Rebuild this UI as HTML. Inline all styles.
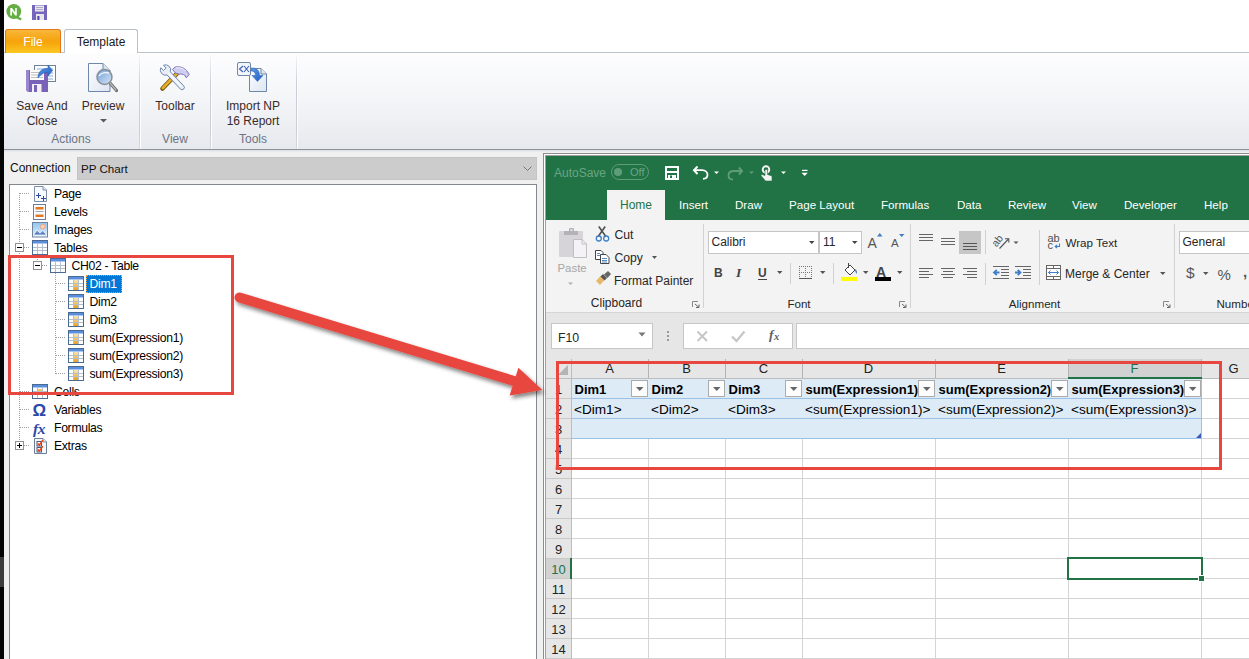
<!DOCTYPE html>
<html><head><meta charset="utf-8">
<style>
*{margin:0;padding:0;box-sizing:border-box}
html,body{width:1249px;height:659px;overflow:hidden;background:#f0f0f0;font-family:"Liberation Sans",sans-serif;position:relative}
.a{position:absolute}
.t{position:absolute;white-space:nowrap;line-height:1}
svg{position:absolute;overflow:visible}
</style></head><body>
<div class="a" style="left:0px;top:0px;width:4px;height:659px;background:#050505"></div>
<div class="a" style="left:0px;top:557px;width:4px;height:30px;background:#3c3c3c"></div>
<div class="a" style="left:4px;top:0px;width:1245px;height:52px;background:#fff"></div>
<div class="a" style="left:4px;top:52px;width:1245px;height:97px;background:linear-gradient(#fdfdfe,#f6f7f9 40%,#e6e9ee);"></div>
<div class="a" style="left:4px;top:52px;width:1245px;height:1px;background:#bcc3cc"></div>
<div class="a" style="left:4px;top:149px;width:1245px;height:1px;background:#8d939b"></div>
<div class="a" style="left:4px;top:150px;width:1245px;height:2px;background:linear-gradient(#d9dce1,#eeeff0)"></div>
<div class="a" style="left:139px;top:55px;width:1px;height:94px;background:linear-gradient(#f4f5f7,#c9ced6 30%,#c9ced6 80%,#d5d9df)"></div>
<div class="a" style="left:140px;top:55px;width:1px;height:94px;background:#fdfdfd"></div>
<div class="a" style="left:210px;top:55px;width:1px;height:94px;background:linear-gradient(#f4f5f7,#c9ced6 30%,#c9ced6 80%,#d5d9df)"></div>
<div class="a" style="left:211px;top:55px;width:1px;height:94px;background:#fdfdfd"></div>
<div class="a" style="left:296px;top:55px;width:1px;height:94px;background:linear-gradient(#f4f5f7,#c9ced6 30%,#c9ced6 80%,#d5d9df)"></div>
<div class="a" style="left:297px;top:55px;width:1px;height:94px;background:#fdfdfd"></div>
<div class="a" style="left:5px;top:29px;width:56px;height:24px;border:1px solid #e2781a;border-bottom:none;border-radius:3px 3px 0 0;background:linear-gradient(#f9b73b,#f6a30f 45%,#f7a90c 60%,#fbc824)"></div>
<div class="t" style="left:-67px;width:200px;text-align:center;top:35.84px;font-size:12px;color:#fff;font-weight:400;">File</div>
<div class="a" style="left:64px;top:29px;width:74px;height:24px;border:1px solid #b9c0c9;border-bottom:none;border-radius:3px 3px 0 0;background:#fff"></div>
<div class="t" style="left:1px;width:200px;text-align:center;top:35.84px;font-size:12px;color:#1a1a1a;font-weight:400;">Template</div>
<svg style="left:0;top:0" width="60" height="28" viewBox="0 0 60 28">
<circle cx="13.8" cy="11.5" r="7.4" fill="#64ae42"/>
<path d="M16 15.5 L21.8 18.5 L20.5 20.5 L15 17.5Z" fill="#64ae42"/>
<path d="M10.3 15.5 V8 H12 L15.2 12.6 V8 H16.8 V15.5 H15.2 L12 10.9 V15.5Z" fill="#fff"/>
<rect x="32" y="5" width="15" height="15" fill="#7565bd"/>
<rect x="35" y="5.5" width="9" height="6" fill="#e8e8f0"/>
<rect x="36" y="7" width="7" height="0.8" fill="#9a9ab0"/><rect x="36" y="9" width="7" height="0.8" fill="#9a9ab0"/>
<rect x="36" y="14" width="8" height="6" fill="#e6e6ea"/>
<rect x="37.3" y="16" width="2.2" height="4" fill="#5a4aa8"/>
</svg>
<svg style="left:0;top:55" width="300" height="45" viewBox="0 55 300 45">
<defs>
<linearGradient id="pg" x1="0" y1="0" x2="1" y2="1"><stop offset="0" stop-color="#fdfdff"/><stop offset="1" stop-color="#dde5f2"/></linearGradient>
<linearGradient id="lens" x1="0" y1="0" x2="1" y2="1"><stop offset="0" stop-color="#6e9fd8"/><stop offset="1" stop-color="#d8e6f6"/></linearGradient>
<linearGradient id="arr" x1="0" y1="0" x2="1" y2="1"><stop offset="0" stop-color="#5b9ae8"/><stop offset="1" stop-color="#1e5fc0"/></linearGradient>
</defs>
<!-- save and close -->
<rect x="34.5" y="65.5" width="21" height="16" fill="#fafcff" stroke="#6f8297"/>
<path d="M37 69h16M42 73h11M42 76h11M42 79h11" stroke="#8fa8d8" stroke-width="1"/>
<path d="M26 70 H48 V92 H28 L26 90Z" fill="#7a62b8"/>
<path d="M26 70 H29 V92 H28 L26 90Z" fill="#9b86d0"/>
<rect x="30" y="70" width="14" height="10" fill="#fbfbfb"/>
<path d="M31 72.5h12M31 75h12M31 77.5h12" stroke="#b8b8b8" stroke-width="0.9"/>
<rect x="32" y="84" width="9.5" height="8" fill="#f1f1f1"/>
<rect x="34" y="85" width="3" height="7" fill="#7a62b8"/>
<path d="M38 78 C38 71 43 68 48 68.5 V65 L52.5 70.5 L48 76 V72.5 C44 72 41 74 38 78Z" fill="url(#arr)" stroke="#2a5cb0" stroke-width="0.6"/>
<!-- preview -->
<path d="M88.5 63.5 H103 L110 70.5 V91.5 H88.5Z" fill="url(#pg)" stroke="#6f87a8"/>
<path d="M103 63.5 V70.5 H110" fill="#d8e4f4" stroke="#6f87a8"/>
<line x1="110" y1="83" x2="116.5" y2="90.5" stroke="#6a6a6a" stroke-width="3.2" stroke-linecap="round"/>
<line x1="110" y1="83" x2="116" y2="90" stroke="#bdbdbd" stroke-width="1.2" stroke-linecap="round"/>
<circle cx="104.5" cy="77" r="7.5" fill="url(#lens)" stroke="#8a8f96" stroke-width="1.5"/>
<path d="M99 76 C101 73 105 72 109 73" stroke="#f2f6fc" stroke-width="1.3" fill="none"/>
<!-- toolbar -->
<line x1="162.5" y1="88.5" x2="177.5" y2="73" stroke="#7a5a18" stroke-width="4.6" stroke-linecap="round"/>
<line x1="162.8" y1="88" x2="177.5" y2="73" stroke="#e6ad2a" stroke-width="2.6" stroke-linecap="round"/>
<path d="M172.5 69.5 L174.5 67.3 C178 66 183 67 186.5 70.5 L189.3 74.3 L186.3 77.8 L184.8 75.3 C183 74 181 73.8 179 74.2 L175.5 73 Z" fill="#cfcdee" stroke="#6e66b8" stroke-width="0.9"/>
<path d="M176 68 C179 67.3 183 68 185.5 71" stroke="#f4f4fc" stroke-width="1" fill="none"/>
<g transform="translate(165.5,70) rotate(46.5)">
<path d="M4.66 -2.3 L24 -2.3 A2.3 2.3 0 0 1 24 2.3 L4.66 2.3 A5.2 5.2 0 0 1 -4.88 1.8 L-1 1.8 L-1 -1.8 L-4.88 -1.8 A5.2 5.2 0 0 1 4.66 -2.3 Z" fill="#e8eef8" stroke="#6e83a8" stroke-width="0.9"/>
<path d="M4 0 H23" stroke="#fafcff" stroke-width="1.2"/>
</g>
<!-- import np -->
<path d="M249.5 68.5 H261 L266.5 74 V91.5 H249.5Z" fill="url(#pg)" stroke="#6f87a8"/>
<path d="M261 68.5 V74 H266.5" fill="#e0e8f4" stroke="#6f87a8"/>
<rect x="237.5" y="62.5" width="13" height="13" rx="1.5" fill="#f2f5fa" stroke="#6f87a8"/>
<path d="M243 66 L239.5 69 L243 72" stroke="#3a5fb5" stroke-width="1.1" fill="none"/>
<path d="M244 66 L249 72 M249 66 L244 72" stroke="#3a5fb5" stroke-width="1.1"/>
<path d="M251 68 C256 67.5 259.5 70 259.5 75.5 H263 L257.5 81.5 L252 75.5 H255.5 C255.5 72.5 254 71 251 71 Z" fill="url(#arr)" stroke="#2a5cb0" stroke-width="0.5"/>
</svg>
<div class="t" style="left:-58px;width:200px;text-align:center;top:99.84px;font-size:12px;color:#3a2a2a;font-weight:400;">Save And</div>
<div class="t" style="left:-58px;width:200px;text-align:center;top:114.84px;font-size:12px;color:#3a2a2a;font-weight:400;">Close</div>
<div class="t" style="left:3px;width:200px;text-align:center;top:99.84px;font-size:12px;color:#3a2a2a;font-weight:400;">Preview</div>
<svg style="left:100px;top:119px" width="7" height="4"><path d="M0 0H7L3.5 3.5Z" fill="#5a5a5a"/></svg>
<div class="t" style="left:75px;width:200px;text-align:center;top:99.84px;font-size:12px;color:#3a2a2a;font-weight:400;">Toolbar</div>
<div class="t" style="left:153px;width:200px;text-align:center;top:99.84px;font-size:12px;color:#3a2a2a;font-weight:400;">Import NP</div>
<div class="t" style="left:153px;width:200px;text-align:center;top:114.84px;font-size:12px;color:#3a2a2a;font-weight:400;">16 Report</div>
<div class="t" style="left:-29px;width:200px;text-align:center;top:132.84px;font-size:12px;color:#6c7482;font-weight:400;">Actions</div>
<div class="t" style="left:75px;width:200px;text-align:center;top:132.84px;font-size:12px;color:#6c7482;font-weight:400;">View</div>
<div class="t" style="left:153px;width:200px;text-align:center;top:132.84px;font-size:12px;color:#6c7482;font-weight:400;">Tools</div>
<div class="t" style="left:10px;top:161.84px;font-size:12px;color:#111;font-weight:400;">Connection</div>
<div class="a" style="left:77px;top:157px;width:460px;height:23px;background:#cccccc;border:1px solid #c4c4c4"></div>
<div class="t" style="left:81px;top:163.18px;font-size:11.6px;color:#111;font-weight:400;">PP Chart</div>
<svg style="left:523px;top:166px" width="10" height="6"><path d="M0.5 0.5 L4.5 4.5 L8.5 0.5" stroke="#7a7a7a" fill="none" stroke-width="1"/></svg>
<div class="a" style="left:9px;top:184px;width:528px;height:475px;background:#fff;border:1px solid #828790;border-bottom:none"></div>
<div class="a" style="left:19px;top:193px;width:1px;height:253px;background:repeating-linear-gradient(#a0a0a0 0 1px,transparent 1px 2px)"></div>
<div class="a" style="left:20px;top:193px;width:10px;height:1px;background:repeating-linear-gradient(90deg,#a0a0a0 0 1px,transparent 1px 2px)"></div>
<div class="a" style="left:20px;top:211px;width:10px;height:1px;background:repeating-linear-gradient(90deg,#a0a0a0 0 1px,transparent 1px 2px)"></div>
<div class="a" style="left:20px;top:229px;width:10px;height:1px;background:repeating-linear-gradient(90deg,#a0a0a0 0 1px,transparent 1px 2px)"></div>
<div class="a" style="left:20px;top:247px;width:10px;height:1px;background:repeating-linear-gradient(90deg,#a0a0a0 0 1px,transparent 1px 2px)"></div>
<div class="a" style="left:20px;top:391px;width:10px;height:1px;background:repeating-linear-gradient(90deg,#a0a0a0 0 1px,transparent 1px 2px)"></div>
<div class="a" style="left:20px;top:409px;width:10px;height:1px;background:repeating-linear-gradient(90deg,#a0a0a0 0 1px,transparent 1px 2px)"></div>
<div class="a" style="left:20px;top:427px;width:10px;height:1px;background:repeating-linear-gradient(90deg,#a0a0a0 0 1px,transparent 1px 2px)"></div>
<div class="a" style="left:20px;top:445px;width:10px;height:1px;background:repeating-linear-gradient(90deg,#a0a0a0 0 1px,transparent 1px 2px)"></div>
<div class="a" style="left:37px;top:247px;width:1px;height:19px;background:repeating-linear-gradient(#a0a0a0 0 1px,transparent 1px 2px)"></div>
<div class="a" style="left:38px;top:265px;width:10px;height:1px;background:repeating-linear-gradient(90deg,#a0a0a0 0 1px,transparent 1px 2px)"></div>
<div class="a" style="left:55px;top:265px;width:1px;height:109px;background:repeating-linear-gradient(#a0a0a0 0 1px,transparent 1px 2px)"></div>
<div class="a" style="left:56px;top:283px;width:10px;height:1px;background:repeating-linear-gradient(90deg,#a0a0a0 0 1px,transparent 1px 2px)"></div>
<div class="a" style="left:56px;top:301px;width:10px;height:1px;background:repeating-linear-gradient(90deg,#a0a0a0 0 1px,transparent 1px 2px)"></div>
<div class="a" style="left:56px;top:319px;width:10px;height:1px;background:repeating-linear-gradient(90deg,#a0a0a0 0 1px,transparent 1px 2px)"></div>
<div class="a" style="left:56px;top:337px;width:10px;height:1px;background:repeating-linear-gradient(90deg,#a0a0a0 0 1px,transparent 1px 2px)"></div>
<div class="a" style="left:56px;top:355px;width:10px;height:1px;background:repeating-linear-gradient(90deg,#a0a0a0 0 1px,transparent 1px 2px)"></div>
<div class="a" style="left:56px;top:373px;width:10px;height:1px;background:repeating-linear-gradient(90deg,#a0a0a0 0 1px,transparent 1px 2px)"></div>
<div class="a" style="left:15px;top:243px;width:9px;height:9px;border:1px solid #919191;background:#fff"></div>
<div class="a" style="left:17px;top:247px;width:5px;height:1px;background:#000"></div>
<div class="a" style="left:33px;top:261px;width:9px;height:9px;border:1px solid #919191;background:#fff"></div>
<div class="a" style="left:35px;top:265px;width:5px;height:1px;background:#000"></div>
<div class="a" style="left:15px;top:441px;width:9px;height:9px;border:1px solid #919191;background:#fff"></div>
<div class="a" style="left:17px;top:445px;width:5px;height:1px;background:#000"></div>
<div class="a" style="left:19px;top:443px;width:1px;height:5px;background:#000"></div>
<svg style="left:34px;top:186px" width="14" height="16" viewBox="0 0 14 16">
<path d="M0.5 0.5H9L12.5 4V15.5H0.5Z" fill="#f8faff" stroke="#7d8ea8"/>
<path d="M9 0.5V4H12.5" fill="#e8eef8" stroke="#7d8ea8"/>
<path d="M2 9.5H7M4.5 7V12M7 12.5H12M9.5 10V15" stroke="#2b48a0" stroke-width="1"/>
</svg>
<svg style="left:33px;top:204px" width="14" height="16" viewBox="0 0 14 16">
<rect x="0.5" y="0.5" width="12" height="15" fill="#f8faff" stroke="#6d7f98"/>
<rect x="2.5" y="3" width="8" height="2.5" fill="#e07a20"/>
<rect x="2.5" y="7" width="8" height="1" fill="#9aa8c0"/>
<rect x="2.5" y="10.5" width="8" height="2.5" fill="#e07a20"/>
</svg>
<svg style="left:32px;top:222px" width="16" height="16" viewBox="0 0 16 16">
<defs><linearGradient id="sky" x1="0" y1="0" x2="0" y2="1"><stop offset="0" stop-color="#8cc6f2"/><stop offset="1" stop-color="#e4f2fc"/></linearGradient>
<linearGradient id="mtn" x1="0" y1="0" x2="0" y2="1"><stop offset="0" stop-color="#90a8d8"/><stop offset="1" stop-color="#4a70c0"/></linearGradient></defs>
<rect x="0.5" y="0.5" width="15" height="14.5" fill="url(#sky)" stroke="#72849c"/>
<circle cx="10.8" cy="4.6" r="2.4" fill="#fcd0b0" stroke="#f49a78" stroke-width="0.9"/>
<path d="M1.5 13 L5 7.8 L8 11.2 L10.8 8.3 L14.5 13 Z" fill="url(#mtn)" stroke="#fff" stroke-width="0.7"/>
</svg>
<svg style="left:32px;top:240px" width="16" height="15" viewBox="0 0 16 15"><rect x="0.5" y="0.5" width="15" height="14" fill="#fff" stroke="#4b6a90"/><rect x="1" y="1" width="14" height="2.5" fill="#5a8fe0"/><path d="M1 7.5H15M1 10.5H15M5.5 3.5V14M10.5 3.5V14" stroke="#b4bfcc" stroke-width="1"/></svg>
<svg style="left:50px;top:258px" width="16" height="15" viewBox="0 0 16 15"><rect x="0.5" y="0.5" width="15" height="14" fill="#fff" stroke="#4b6a90"/><rect x="1" y="1" width="14" height="2.5" fill="#5a8fe0"/><path d="M1 7.5H15M1 10.5H15M5.5 3.5V14M10.5 3.5V14" stroke="#b4bfcc" stroke-width="1"/></svg>
<svg style="left:68px;top:276px" width="16" height="15" viewBox="0 0 16 15"><rect x="0.5" y="0.5" width="15" height="14" fill="#fff" stroke="#4b6a90"/><rect x="1" y="1" width="14" height="2.5" fill="#5a8fe0"/><defs><linearGradient id="gd68_276" x1="0" y1="0" x2="0" y2="1"><stop offset="0" stop-color="#fbe7b0"/><stop offset="1" stop-color="#e8a020"/></linearGradient></defs><rect x="6" y="4" width="4.5" height="10" fill="url(#gd68_276)"/><path d="M1 7.5H15M1 10.5H15M5.5 3.5V14M10.5 3.5V14" stroke="#b4bfcc" stroke-width="1"/></svg>
<svg style="left:68px;top:294px" width="16" height="15" viewBox="0 0 16 15"><rect x="0.5" y="0.5" width="15" height="14" fill="#fff" stroke="#4b6a90"/><rect x="1" y="1" width="14" height="2.5" fill="#5a8fe0"/><defs><linearGradient id="gd68_294" x1="0" y1="0" x2="0" y2="1"><stop offset="0" stop-color="#fbe7b0"/><stop offset="1" stop-color="#e8a020"/></linearGradient></defs><rect x="6" y="4" width="4.5" height="10" fill="url(#gd68_294)"/><path d="M1 7.5H15M1 10.5H15M5.5 3.5V14M10.5 3.5V14" stroke="#b4bfcc" stroke-width="1"/></svg>
<svg style="left:68px;top:312px" width="16" height="15" viewBox="0 0 16 15"><rect x="0.5" y="0.5" width="15" height="14" fill="#fff" stroke="#4b6a90"/><rect x="1" y="1" width="14" height="2.5" fill="#5a8fe0"/><defs><linearGradient id="gd68_312" x1="0" y1="0" x2="0" y2="1"><stop offset="0" stop-color="#fbe7b0"/><stop offset="1" stop-color="#e8a020"/></linearGradient></defs><rect x="6" y="4" width="4.5" height="10" fill="url(#gd68_312)"/><path d="M1 7.5H15M1 10.5H15M5.5 3.5V14M10.5 3.5V14" stroke="#b4bfcc" stroke-width="1"/></svg>
<svg style="left:68px;top:330px" width="16" height="15" viewBox="0 0 16 15"><rect x="0.5" y="0.5" width="15" height="14" fill="#fff" stroke="#4b6a90"/><rect x="1" y="1" width="14" height="2.5" fill="#5a8fe0"/><defs><linearGradient id="gd68_330" x1="0" y1="0" x2="0" y2="1"><stop offset="0" stop-color="#fbe7b0"/><stop offset="1" stop-color="#e8a020"/></linearGradient></defs><rect x="6" y="4" width="4.5" height="10" fill="url(#gd68_330)"/><path d="M1 7.5H15M1 10.5H15M5.5 3.5V14M10.5 3.5V14" stroke="#b4bfcc" stroke-width="1"/></svg>
<svg style="left:68px;top:348px" width="16" height="15" viewBox="0 0 16 15"><rect x="0.5" y="0.5" width="15" height="14" fill="#fff" stroke="#4b6a90"/><rect x="1" y="1" width="14" height="2.5" fill="#5a8fe0"/><defs><linearGradient id="gd68_348" x1="0" y1="0" x2="0" y2="1"><stop offset="0" stop-color="#fbe7b0"/><stop offset="1" stop-color="#e8a020"/></linearGradient></defs><rect x="6" y="4" width="4.5" height="10" fill="url(#gd68_348)"/><path d="M1 7.5H15M1 10.5H15M5.5 3.5V14M10.5 3.5V14" stroke="#b4bfcc" stroke-width="1"/></svg>
<svg style="left:68px;top:366px" width="16" height="15" viewBox="0 0 16 15"><rect x="0.5" y="0.5" width="15" height="14" fill="#fff" stroke="#4b6a90"/><rect x="1" y="1" width="14" height="2.5" fill="#5a8fe0"/><defs><linearGradient id="gd68_366" x1="0" y1="0" x2="0" y2="1"><stop offset="0" stop-color="#fbe7b0"/><stop offset="1" stop-color="#e8a020"/></linearGradient></defs><rect x="6" y="4" width="4.5" height="10" fill="url(#gd68_366)"/><path d="M1 7.5H15M1 10.5H15M5.5 3.5V14M10.5 3.5V14" stroke="#b4bfcc" stroke-width="1"/></svg>
<svg style="left:32px;top:384px" width="16" height="15" viewBox="0 0 16 15"><rect x="0.5" y="0.5" width="15" height="14" fill="#fff" stroke="#4b6a90"/><rect x="1" y="1" width="14" height="2.5" fill="#5a8fe0"/><rect x="6" y="5" width="4.5" height="3" fill="#f4c860"/><path d="M1 7.5H15M1 10.5H15M5.5 3.5V14M10.5 3.5V14" stroke="#b4bfcc" stroke-width="1"/></svg>
<div class="t" style="left:32.5px;top:402.11px;font-size:17px;color:#2b49a8;font-weight:700;">&#937;</div>
<div class="t" style="left:33px;top:420.88px;font-size:15.5px;color:#2b49a8;font-weight:400;font-style:italic;font-family:'Liberation Serif',serif;font-weight:700;letter-spacing:-0.5px;">fx</div>
<svg style="left:34px;top:438px" width="14" height="16" viewBox="0 0 14 16">
<path d="M0.5 0.5H9L12.5 4V15.5H0.5Z" fill="#f4f7fc" stroke="#6d7f98"/>
<path d="M9 0.5V4H12.5" fill="#dde6f2" stroke="#6d7f98" stroke-width="0.8"/>
<rect x="3" y="3.5" width="4.5" height="4.5" fill="#fff" stroke="#4a5a78" stroke-width="1"/>
<rect x="3" y="9.5" width="4.5" height="4.5" fill="#fff" stroke="#4a5a78" stroke-width="1"/>
<path d="M3.8 5.5L5.3 7.2L8.8 2.2M3.8 11.5L5.3 13.2L8.8 8.2" stroke="#f03a10" stroke-width="1.4" fill="none"/>
</svg>
<div class="t" style="left:54px;top:188.17px;font-size:12.2px;color:#000;font-weight:400;letter-spacing:-0.3px;">Page</div>
<div class="t" style="left:54px;top:206.17px;font-size:12.2px;color:#000;font-weight:400;letter-spacing:-0.3px;">Levels</div>
<div class="t" style="left:54px;top:224.17px;font-size:12.2px;color:#000;font-weight:400;letter-spacing:-0.3px;">Images</div>
<div class="t" style="left:54px;top:242.17px;font-size:12.2px;color:#000;font-weight:400;letter-spacing:-0.3px;">Tables</div>
<div class="t" style="left:71.5px;top:260.17px;font-size:12.2px;color:#000;font-weight:400;letter-spacing:-0.3px;">CH02 - Table</div>
<div class="a" style="left:86px;top:275px;width:36px;height:18px;background:#0078d7;outline:1px dotted #f0a040;outline-offset:-1px"></div>
<div class="t" style="left:89.5px;top:278.17px;font-size:12.2px;color:#fff;font-weight:400;letter-spacing:-0.3px;">Dim1</div>
<div class="t" style="left:89.5px;top:296.17px;font-size:12.2px;color:#000;font-weight:400;letter-spacing:-0.3px;">Dim2</div>
<div class="t" style="left:89.5px;top:314.17px;font-size:12.2px;color:#000;font-weight:400;letter-spacing:-0.3px;">Dim3</div>
<div class="t" style="left:89.5px;top:332.17px;font-size:12.2px;color:#000;font-weight:400;letter-spacing:-0.3px;">sum(Expression1)</div>
<div class="t" style="left:89.5px;top:350.17px;font-size:12.2px;color:#000;font-weight:400;letter-spacing:-0.3px;">sum(Expression2)</div>
<div class="t" style="left:89.5px;top:368.17px;font-size:12.2px;color:#000;font-weight:400;letter-spacing:-0.3px;">sum(Expression3)</div>
<div class="t" style="left:54px;top:386.17px;font-size:12.2px;color:#000;font-weight:400;letter-spacing:-0.3px;">Cells</div>
<div class="t" style="left:54px;top:404.17px;font-size:12.2px;color:#000;font-weight:400;letter-spacing:-0.3px;">Variables</div>
<div class="t" style="left:54px;top:422.17px;font-size:12.2px;color:#000;font-weight:400;letter-spacing:-0.3px;">Formulas</div>
<div class="t" style="left:54px;top:440.17px;font-size:12.2px;color:#000;font-weight:400;letter-spacing:-0.3px;">Extras</div>
<div class="a" style="left:8px;top:255px;width:226px;height:140px;border:3px solid #e8473f"></div>
<div class="a" style="left:543px;top:153px;width:706px;height:506px;background:#8e8e8e"></div>
<div class="a" style="left:544px;top:154px;width:705px;height:505px;background:#fff"></div>
<div class="a" style="left:545px;top:155px;width:704px;height:504px;background:#a0a0a0"></div>
<div class="a" style="left:546px;top:156px;width:703px;height:64px;background:#217346"></div>
<div class="a" style="left:546px;top:220px;width:703px;height:92px;background:#f3f3f3"></div>
<div class="a" style="left:546px;top:312px;width:703px;height:1px;background:#d5d5d5"></div>
<div class="a" style="left:546px;top:313px;width:703px;height:346px;background:#e6e6e6"></div>
<div class="t" style="left:554px;top:166.84px;font-size:12px;color:#6aa583;font-weight:400;">AutoSave</div>
<div class="a" style="left:611px;top:164px;width:38px;height:16px;border:1px solid #5f9c78;border-radius:8px"></div>
<div class="a" style="left:614px;top:168px;width:8px;height:8px;border-radius:50%;background:#5f9c78"></div>
<div class="t" style="left:630px;top:167.19px;font-size:11px;color:#6aa583;font-weight:400;">Off</div>
<svg style="left:660px;top:160px" width="160" height="26" viewBox="660 160 160 26">
<path d="M666 167H678V179H666Z" fill="none" stroke="#fff" stroke-width="2"/>
<rect x="666" y="171" width="12" height="2" fill="#fff"/>
<rect x="668" y="175" width="8" height="4" fill="#fff"/>
<rect x="670" y="175.5" width="2" height="2.5" fill="#217346"/>
<path d="M697.5 166.5 L694 170.2 L697.5 174" stroke="#fff" stroke-width="2" fill="none" stroke-linejoin="miter"/>
<path d="M694.5 170.2 H702 C705.5 170.2 707.5 172.3 707.5 174.8 C707.5 177.3 705.5 178.8 703 178.8" stroke="#fff" stroke-width="1.8" fill="none"/>
<path d="M714 171.5H719L716.5 174Z" fill="#fff"/>
<path d="M739 167.5 L742 171 L739 174.5" stroke="#5f9c78" stroke-width="2" fill="none"/>
<path d="M741.5 171 H734 C730.5 171 728.5 173 728.5 175.5 C728.5 178 730.5 179.5 733 179.5" stroke="#5f9c78" stroke-width="1.8" fill="none"/>
<path d="M749 171.5H754L751.5 174Z" fill="#5f9c78"/>
<circle cx="766" cy="169.5" r="3.3" fill="none" stroke="#f4f4f4" stroke-width="1.9"/>
<path d="M765 169.5 V175.5 L762 174.5 L761 175.5 L765.5 181 H772 V176 L767.5 174.5 V169.5 Z" fill="#f4f4f4" stroke="#217346" stroke-width="0.6"/>
<path d="M781 171.5H786L783.5 174Z" fill="#fff"/>
<rect x="802" y="169.8" width="5.5" height="1.2" fill="#fff"/>
<path d="M801.5 172.8H807.8L804.65 176Z" fill="#fff"/>
</svg>
<div class="a" style="left:607px;top:190px;width:58px;height:30px;background:#f3f3f3"></div>
<div class="t" style="left:620px;top:198.84px;font-size:12px;color:#217346;font-weight:400;">Home</div>
<div class="t" style="left:679px;top:199.18px;font-size:11.6px;color:#fff;font-weight:400;">Insert</div>
<div class="t" style="left:735px;top:199.18px;font-size:11.6px;color:#fff;font-weight:400;">Draw</div>
<div class="t" style="left:789px;top:199.18px;font-size:11.6px;color:#fff;font-weight:400;">Page Layout</div>
<div class="t" style="left:881px;top:199.18px;font-size:11.6px;color:#fff;font-weight:400;">Formulas</div>
<div class="t" style="left:957px;top:199.18px;font-size:11.6px;color:#fff;font-weight:400;">Data</div>
<div class="t" style="left:1008px;top:199.18px;font-size:11.6px;color:#fff;font-weight:400;">Review</div>
<div class="t" style="left:1072px;top:199.18px;font-size:11.6px;color:#fff;font-weight:400;">View</div>
<div class="t" style="left:1124px;top:199.18px;font-size:11.6px;color:#fff;font-weight:400;">Developer</div>
<div class="t" style="left:1204px;top:199.18px;font-size:11.6px;color:#fff;font-weight:400;">Help</div>
<div class="a" style="left:703px;top:224px;width:1px;height:84px;background:#d2d2d2"></div>
<div class="a" style="left:910px;top:224px;width:1px;height:84px;background:#d2d2d2"></div>
<div class="a" style="left:1174px;top:224px;width:1px;height:84px;background:#d2d2d2"></div>
<svg style="left:555px;top:225px" width="40" height="65" viewBox="555 225 40 65">
<rect x="559" y="231" width="24" height="26" rx="1" fill="#d6d4d8"/>
<rect x="564" y="231" width="14" height="4" fill="#b4b2b6"/>
<rect x="569" y="228" width="5" height="4" rx="1" fill="#b4b2b6"/>
<rect x="570.5" y="229.3" width="2" height="1.5" fill="#f3f3f3"/>
<path d="M573.5 239.5 H582 L586.5 244 V257.5 H573.5Z" fill="#f4f2f6" stroke="#c0bec2"/>
<path d="M582 239.5V244H586.5" fill="none" stroke="#c0bec2"/>
<path d="M568 282.5H573L570.5 285Z" fill="#b0b0b0"/>
</svg>
<div class="t" style="left:557.5px;top:263.05px;font-size:11.4px;color:#a6a6a6;font-weight:400;">Paste</div>
<svg style="left:593px;top:224px" width="22" height="66" viewBox="593 224 22 66">
<path d="M598.8 226.5 L605.8 236.5 M605.2 226.5 L598.2 236.5" stroke="#505050" stroke-width="1.6"/>
<circle cx="598.8" cy="238.5" r="2.5" fill="none" stroke="#3e7fc8" stroke-width="1.3"/>
<circle cx="606.2" cy="238.5" r="2.5" fill="none" stroke="#3e7fc8" stroke-width="1.3"/>
<path d="M595.5 250.5H601L603 252.5V259.5H595.5Z" fill="#fff" stroke="#444" stroke-width="1"/>
<path d="M600.5 254.5H606L609 257.5V263.5H600.5Z" fill="#fff" stroke="#444" stroke-width="1"/>
<path d="M597 253.5h3M597 255.5h3M602 258.5h5M602 260.5h5M602 262h5" stroke="#3e7fc8" stroke-width="0.9"/>
<path d="M596 281 L600.5 276 L604.5 280 L600 285 Z" fill="#e8b86a"/>
<path d="M600.5 276.5 L603 274 L607 278 L604.5 280.5Z" fill="#555"/>
<path d="M604 274.5 L608 271 L611 274 L607.5 278Z" fill="#666"/>
</svg>
<div class="t" style="left:614.5px;top:229.17px;font-size:12.2px;color:#262626;font-weight:400;">Cut</div>
<div class="t" style="left:614.5px;top:251.97px;font-size:12.2px;color:#262626;font-weight:400;">Copy</div>
<svg style="left:652px;top:256px" width="6" height="4"><path d="M0 0H5L2.5 3Z" fill="#555"/></svg>
<div class="t" style="left:614px;top:274.84px;font-size:12px;color:#262626;font-weight:400;">Format Painter</div>
<div class="t" style="left:516.5px;width:200px;text-align:center;top:297.44px;font-size:12px;color:#262626;font-weight:400;">Clipboard</div>
<svg style="left:692px;top:301px" width="8" height="7" viewBox="0 0 8 7"><path d="M0.5 6V0.5H6" fill="none" stroke="#888" stroke-width="1"/><path d="M3 3L7 6.5M7 3.5V6.5H4" fill="none" stroke="#666" stroke-width="1"/></svg>
<div class="a" style="left:708px;top:231px;width:111px;height:23px;background:#fff;border:1px solid #c6c6c6"></div>
<div class="t" style="left:711.5px;top:236.34px;font-size:12px;color:#262626;font-weight:400;">Calibri</div>
<svg style="left:809px;top:241px" width="6" height="4"><path d="M0 0H5.5L2.75 3Z" fill="#444"/></svg>
<div class="a" style="left:819px;top:231px;width:43px;height:23px;background:#fff;border:1px solid #c6c6c6"></div>
<div class="t" style="left:823px;top:236.34px;font-size:12px;color:#262626;font-weight:400;">11</div>
<svg style="left:852px;top:241px" width="6" height="4"><path d="M0 0H5.5L2.75 3Z" fill="#444"/></svg>
<div class="t" style="left:867.5px;top:236.15px;font-size:14px;color:#555;font-weight:400;">A</div>
<svg style="left:877px;top:233px" width="6" height="4"><path d="M0 3.5H5.5L2.75 0Z" fill="#3e7fc8"/></svg>
<div class="t" style="left:891px;top:238.27px;font-size:11.5px;color:#555;font-weight:400;">A</div>
<svg style="left:899px;top:234px" width="6" height="4"><path d="M0 0H5.5L2.75 3Z" fill="#3e7fc8"/></svg>
<div class="t" style="left:714px;top:266.84px;font-size:12px;color:#444;font-weight:700;">B</div>
<div class="t" style="left:736px;top:265.57px;font-size:13.5px;color:#444;font-weight:700;font-style:italic;font-family:'Liberation Serif',serif;">I</div>
<div class="t" style="left:758px;top:266.84px;font-size:12px;color:#444;font-weight:700;">U</div>
<div class="a" style="left:758px;top:279px;width:9px;height:1px;background:#444"></div>
<svg style="left:777px;top:271px" width="6" height="4"><path d="M0 0H5.5L2.75 3Z" fill="#555"/></svg>
<div class="a" style="left:790px;top:263px;width:1px;height:21px;background:#d0d0d0"></div>
<svg style="left:798px;top:265px" width="16" height="16" viewBox="798 265 16 16">
<path d="M799.5 266V278M805.5 266V278M811.5 266V278M799 266.5H812M799 272.5H812" stroke="#777" stroke-width="1" stroke-dasharray="1 1"/>
<path d="M799 278.5H812" stroke="#555" stroke-width="1"/>
</svg>
<svg style="left:820px;top:271px" width="6" height="4"><path d="M0 0H5.5L2.75 3Z" fill="#555"/></svg>
<div class="a" style="left:833px;top:263px;width:1px;height:21px;background:#d0d0d0"></div>
<svg style="left:840px;top:262px" width="20" height="20" viewBox="840 262 20 20">
<path d="M845 270 L850 265 L855 270 L850 275Z" fill="#fff" stroke="#444" stroke-width="1"/>
<path d="M848.5 263V268" stroke="#444" stroke-width="1"/>
<path d="M855 269 C857 270 857.5 272 856.5 274 C855.5 272.5 855 271 855 269Z" fill="#3e7fc8"/>
<rect x="841" y="277" width="16" height="4" fill="#ffff00"/>
</svg>
<svg style="left:863px;top:271px" width="6" height="4"><path d="M0 0H5.5L2.75 3Z" fill="#555"/></svg>
<div class="t" style="left:876px;top:264.65px;font-size:14px;color:#444;font-weight:700;">A</div>
<div class="a" style="left:875px;top:277px;width:16px;height:4px;background:#000"></div>
<svg style="left:897px;top:271px" width="6" height="4"><path d="M0 0H5.5L2.75 3Z" fill="#555"/></svg>
<div class="t" style="left:699px;width:200px;text-align:center;top:297.68px;font-size:11.6px;color:#262626;font-weight:400;">Font</div>
<svg style="left:899px;top:301px" width="8" height="7" viewBox="0 0 8 7"><path d="M0.5 6V0.5H6" fill="none" stroke="#888" stroke-width="1"/><path d="M3 3L7 6.5M7 3.5V6.5H4" fill="none" stroke="#666" stroke-width="1"/></svg>
<svg style="left:915px;top:228px" width="120" height="60" viewBox="915 228 120 60">
<rect x="959" y="231" width="22" height="23" fill="#c6c6c6"/>
<path d="M919 234.5H933M919 237.5H933M919 240.5H933" stroke="#666" stroke-width="1"/>
<path d="M941 238.5H955M941 241.5H955M941 244.5H955" stroke="#666" stroke-width="1"/>
<path d="M963 243.5H977M963 246.5H977M963 249.5H977" stroke="#555" stroke-width="1"/>
<path d="M919 268.5H933M919 271.5H929M919 274.5H933M919 277.5H929" stroke="#666" stroke-width="1"/>
<path d="M941 268.5H955M943 271.5H953M941 274.5H955M943 277.5H953" stroke="#666" stroke-width="1"/>
<path d="M963 268.5H977M967 271.5H977M963 274.5H977M967 277.5H977" stroke="#666" stroke-width="1"/>
<path d="M993 266.5H1009M1001 269.5H1009M1001 272.5H1009M1001 275.5H1009M993 278.5H1009" stroke="#666" stroke-width="1"/>
<path d="M999.5 272.5 H994 M996.8 269.8 L994 272.5 L996.8 275.2" stroke="#3e7fc8" stroke-width="1.8" fill="none"/>
<path d="M1015 266.5H1031M1023 269.5H1031M1023 272.5H1031M1023 275.5H1031M1015 278.5H1031" stroke="#666" stroke-width="1"/>
<path d="M1015 272.5 H1020.5 M1017.7 269.8 L1020.5 272.5 L1017.7 275.2" stroke="#3e7fc8" stroke-width="1.8" fill="none"/>
<path d="M999.5 248.5 L1008.5 239" stroke="#555" stroke-width="1.1" fill="none"/>
<path d="M1005 238.8 H1008.8 V242.6" stroke="#555" stroke-width="1.1" fill="none"/>
<text x="0" y="0" font-size="10.5" fill="#555" font-family="Liberation Sans" transform="translate(996.5,247.5) rotate(-52)">ab</text>
<path d="M1013.5 241.5H1018.5L1016 244Z" fill="#555"/>
</svg>
<div class="a" style="left:985px;top:230px;width:1px;height:24px;background:#d0d0d0"></div>
<div class="a" style="left:985px;top:263px;width:1px;height:22px;background:#d0d0d0"></div>
<div class="a" style="left:1039px;top:230px;width:1px;height:55px;background:#d0d0d0"></div>
<div class="t" style="left:1047.5px;top:232.69px;font-size:11px;color:#505050;font-weight:400;">ab</div>
<div class="t" style="left:1047.5px;top:240.19px;font-size:11px;color:#505050;font-weight:400;">c</div>
<svg style="left:1054px;top:243px" width="8" height="7"><path d="M5.5 0.5V3.5H1.5M3 2L1.2 3.5L3 5" stroke="#3e7fc8" stroke-width="1.1" fill="none"/></svg>
<div class="t" style="left:1065.5px;top:237.18px;font-size:11.6px;color:#262626;font-weight:400;">Wrap Text</div>
<svg style="left:1045px;top:264px" width="17" height="17" viewBox="1045 264 17 17">
<rect x="1046.5" y="265.5" width="14" height="14" fill="#fff" stroke="#666"/>
<path d="M1046.5 268.5H1060.5M1046.5 276.5H1060.5M1053.5 265.5V268.5M1053.5 276.5V279.5" stroke="#666" stroke-width="1"/>
<path d="M1048.5 272.5H1058.5M1050.5 270.5L1048.5 272.5L1050.5 274.5M1056.5 270.5L1058.5 272.5L1056.5 274.5" stroke="#3e7fc8" stroke-width="1" fill="none"/>
</svg>
<div class="t" style="left:1065px;top:268.34px;font-size:12px;color:#262626;font-weight:400;">Merge &amp; Center</div>
<svg style="left:1160px;top:272px" width="6" height="4"><path d="M0 0H5.5L2.75 3Z" fill="#555"/></svg>
<div class="t" style="left:934.5px;width:200px;text-align:center;top:298.18px;font-size:11.6px;color:#262626;font-weight:400;">Alignment</div>
<svg style="left:1163px;top:301px" width="8" height="7" viewBox="0 0 8 7"><path d="M0.5 6V0.5H6" fill="none" stroke="#888" stroke-width="1"/><path d="M3 3L7 6.5M7 3.5V6.5H4" fill="none" stroke="#666" stroke-width="1"/></svg>
<div class="a" style="left:1179px;top:231px;width:80px;height:23px;background:#fff;border:1px solid #c6c6c6"></div>
<div class="t" style="left:1182.5px;top:236.44px;font-size:12px;color:#262626;font-weight:400;">General</div>
<div class="t" style="left:1186px;top:265.38px;font-size:15.5px;color:#555;font-weight:400;">$</div>
<svg style="left:1203px;top:272px" width="6" height="4"><path d="M0 0H5.5L2.75 3Z" fill="#555"/></svg>
<div class="t" style="left:1217.5px;top:266.60px;font-size:15px;color:#555;font-weight:400;">%</div>
<div class="t" style="left:1243px;top:264.30px;font-size:15px;color:#555;font-weight:700;">,</div>
<div class="t" style="left:1216.5px;top:297.68px;font-size:11.6px;color:#262626;font-weight:400;">Number</div>
<div class="a" style="left:551px;top:323px;width:102px;height:26px;background:#fff;border:1px solid #c6c6c6"></div>
<div class="t" style="left:558px;top:331.59px;font-size:12.3px;color:#262626;font-weight:400;">F10</div>
<svg style="left:638px;top:332px" width="9" height="6"><path d="M0.5 0.5H7.5L4 4.5Z" fill="#777"/></svg>
<div class="a" style="left:667px;top:331px;width:2px;height:2px;background:#9a9a9a"></div>
<div class="a" style="left:667px;top:335px;width:2px;height:2px;background:#9a9a9a"></div>
<div class="a" style="left:667px;top:339px;width:2px;height:2px;background:#9a9a9a"></div>
<div class="a" style="left:683px;top:323px;width:110px;height:26px;background:#fff;border:1px solid #c6c6c6"></div>
<svg style="left:690px;top:328px" width="100" height="18" viewBox="690 328 100 18">
<path d="M697.5 331.5L707 341M707 331.5L697.5 341" stroke="#c4c4c4" stroke-width="1.8"/>
<path d="M732 336.5 L736.5 341 L744.5 331.5" stroke="#c8c8c8" stroke-width="2.4" fill="none"/>
</svg>
<div class="t" style="left:769px;top:327.57px;font-size:13.5px;color:#606060;font-weight:700;font-style:italic;font-family:'Liberation Serif',serif;">f</div>
<div class="t" style="left:774px;top:331.61px;font-size:10.5px;color:#606060;font-weight:700;font-style:italic;font-family:'Liberation Serif',serif;">x</div>
<div class="a" style="left:796px;top:323px;width:460px;height:26px;background:#fff;border:1px solid #c6c6c6"></div>
<div class="a" style="left:546px;top:378px;width:703px;height:281px;background:#fff"></div>
<div class="a" style="left:571px;top:359px;width:678px;height:19px;background:#e6e6e6"></div>
<div class="a" style="left:1068px;top:359px;width:133px;height:19px;background:#d2d2d2"></div>
<div class="a" style="left:546px;top:378px;width:25px;height:281px;background:#e6e6e6"></div>
<div class="a" style="left:546px;top:558px;width:25px;height:20px;background:#d2d2d2"></div>
<div class="a" style="left:571px;top:398px;width:678px;height:1px;background:#d4d4d4"></div>
<div class="a" style="left:546px;top:398px;width:25px;height:1px;background:#c8c8c8"></div>
<div class="a" style="left:571px;top:418px;width:678px;height:1px;background:#d4d4d4"></div>
<div class="a" style="left:546px;top:418px;width:25px;height:1px;background:#c8c8c8"></div>
<div class="a" style="left:571px;top:438px;width:678px;height:1px;background:#d4d4d4"></div>
<div class="a" style="left:546px;top:438px;width:25px;height:1px;background:#c8c8c8"></div>
<div class="a" style="left:571px;top:458px;width:678px;height:1px;background:#d4d4d4"></div>
<div class="a" style="left:546px;top:458px;width:25px;height:1px;background:#c8c8c8"></div>
<div class="a" style="left:571px;top:478px;width:678px;height:1px;background:#d4d4d4"></div>
<div class="a" style="left:546px;top:478px;width:25px;height:1px;background:#c8c8c8"></div>
<div class="a" style="left:571px;top:498px;width:678px;height:1px;background:#d4d4d4"></div>
<div class="a" style="left:546px;top:498px;width:25px;height:1px;background:#c8c8c8"></div>
<div class="a" style="left:571px;top:518px;width:678px;height:1px;background:#d4d4d4"></div>
<div class="a" style="left:546px;top:518px;width:25px;height:1px;background:#c8c8c8"></div>
<div class="a" style="left:571px;top:538px;width:678px;height:1px;background:#d4d4d4"></div>
<div class="a" style="left:546px;top:538px;width:25px;height:1px;background:#c8c8c8"></div>
<div class="a" style="left:571px;top:558px;width:678px;height:1px;background:#d4d4d4"></div>
<div class="a" style="left:546px;top:558px;width:25px;height:1px;background:#c8c8c8"></div>
<div class="a" style="left:571px;top:578px;width:678px;height:1px;background:#d4d4d4"></div>
<div class="a" style="left:546px;top:578px;width:25px;height:1px;background:#c8c8c8"></div>
<div class="a" style="left:571px;top:598px;width:678px;height:1px;background:#d4d4d4"></div>
<div class="a" style="left:546px;top:598px;width:25px;height:1px;background:#c8c8c8"></div>
<div class="a" style="left:571px;top:618px;width:678px;height:1px;background:#d4d4d4"></div>
<div class="a" style="left:546px;top:618px;width:25px;height:1px;background:#c8c8c8"></div>
<div class="a" style="left:571px;top:638px;width:678px;height:1px;background:#d4d4d4"></div>
<div class="a" style="left:546px;top:638px;width:25px;height:1px;background:#c8c8c8"></div>
<div class="a" style="left:571px;top:658px;width:678px;height:1px;background:#d4d4d4"></div>
<div class="a" style="left:546px;top:658px;width:25px;height:1px;background:#c8c8c8"></div>
<div class="a" style="left:648px;top:378px;width:1px;height:281px;background:#d4d4d4"></div>
<div class="a" style="left:648px;top:359px;width:1px;height:19px;background:#b4b4b4"></div>
<div class="a" style="left:725px;top:378px;width:1px;height:281px;background:#d4d4d4"></div>
<div class="a" style="left:725px;top:359px;width:1px;height:19px;background:#b4b4b4"></div>
<div class="a" style="left:802px;top:378px;width:1px;height:281px;background:#d4d4d4"></div>
<div class="a" style="left:802px;top:359px;width:1px;height:19px;background:#b4b4b4"></div>
<div class="a" style="left:935px;top:378px;width:1px;height:281px;background:#d4d4d4"></div>
<div class="a" style="left:935px;top:359px;width:1px;height:19px;background:#b4b4b4"></div>
<div class="a" style="left:1068px;top:378px;width:1px;height:281px;background:#d4d4d4"></div>
<div class="a" style="left:1068px;top:359px;width:1px;height:19px;background:#b4b4b4"></div>
<div class="a" style="left:1201px;top:378px;width:1px;height:281px;background:#d4d4d4"></div>
<div class="a" style="left:1201px;top:359px;width:1px;height:19px;background:#b4b4b4"></div>
<div class="a" style="left:571px;top:359px;width:1px;height:300px;background:#bdbdbd"></div>
<div class="a" style="left:546px;top:378px;width:703px;height:1px;background:#bdbdbd"></div>
<svg style="left:558px;top:365px" width="11" height="11"><path d="M10 0V10H0Z" fill="#b4b4b4"/></svg>
<div class="t" style="left:509.5px;width:200px;text-align:center;top:361.80px;font-size:13px;color:#222;font-weight:400;">A</div>
<div class="t" style="left:586.5px;width:200px;text-align:center;top:361.80px;font-size:13px;color:#222;font-weight:400;">B</div>
<div class="t" style="left:663.5px;width:200px;text-align:center;top:361.80px;font-size:13px;color:#222;font-weight:400;">C</div>
<div class="t" style="left:768.5px;width:200px;text-align:center;top:361.80px;font-size:13px;color:#222;font-weight:400;">D</div>
<div class="t" style="left:901.5px;width:200px;text-align:center;top:361.80px;font-size:13px;color:#222;font-weight:400;">E</div>
<div class="t" style="left:1034.5px;width:200px;text-align:center;top:361.80px;font-size:13px;color:#217346;font-weight:400;">F</div>
<div class="t" style="left:1133.5px;width:200px;text-align:center;top:361.80px;font-size:13px;color:#222;font-weight:400;">G</div>
<div class="a" style="left:1068px;top:377px;width:134px;height:2px;background:#217346"></div>
<div class="t" style="left:458.5px;width:200px;text-align:center;top:383.00px;font-size:13px;color:#222;font-weight:400;">1</div>
<div class="t" style="left:458.5px;width:200px;text-align:center;top:403.00px;font-size:13px;color:#222;font-weight:400;">2</div>
<div class="t" style="left:458.5px;width:200px;text-align:center;top:423.00px;font-size:13px;color:#222;font-weight:400;">3</div>
<div class="t" style="left:458.5px;width:200px;text-align:center;top:443.00px;font-size:13px;color:#222;font-weight:400;">4</div>
<div class="t" style="left:458.5px;width:200px;text-align:center;top:463.00px;font-size:13px;color:#222;font-weight:400;">5</div>
<div class="t" style="left:458.5px;width:200px;text-align:center;top:483.00px;font-size:13px;color:#222;font-weight:400;">6</div>
<div class="t" style="left:458.5px;width:200px;text-align:center;top:503.00px;font-size:13px;color:#222;font-weight:400;">7</div>
<div class="t" style="left:458.5px;width:200px;text-align:center;top:523.00px;font-size:13px;color:#222;font-weight:400;">8</div>
<div class="t" style="left:458.5px;width:200px;text-align:center;top:543.00px;font-size:13px;color:#222;font-weight:400;">9</div>
<div class="t" style="left:458.5px;width:200px;text-align:center;top:563.00px;font-size:13px;color:#217346;font-weight:400;">10</div>
<div class="t" style="left:458.5px;width:200px;text-align:center;top:583.00px;font-size:13px;color:#222;font-weight:400;">11</div>
<div class="t" style="left:458.5px;width:200px;text-align:center;top:603.00px;font-size:13px;color:#222;font-weight:400;">12</div>
<div class="t" style="left:458.5px;width:200px;text-align:center;top:623.00px;font-size:13px;color:#222;font-weight:400;">13</div>
<div class="t" style="left:458.5px;width:200px;text-align:center;top:643.00px;font-size:13px;color:#222;font-weight:400;">14</div>
<div class="a" style="left:570px;top:558px;width:2px;height:21px;background:#217346"></div>
<div class="a" style="left:572px;top:379px;width:629px;height:59px;background:#ddebf7"></div>
<div class="a" style="left:572px;top:398px;width:629px;height:1px;background:#9bc2e6"></div>
<div class="a" style="left:572px;top:418px;width:629px;height:1px;background:#9bc2e6"></div>
<div class="a" style="left:571px;top:438px;width:631px;height:1px;background:#9bc2e6"></div>
<div class="a" style="left:1201px;top:379px;width:1px;height:60px;background:#9bc2e6"></div>
<svg style="left:1196px;top:433px" width="5" height="5"><path d="M5 0V5H0Z" fill="#3a5bb8"/></svg>
<div class="t" style="left:574.5px;top:383.20px;font-size:13px;color:#000;font-weight:700;">Dim1</div>
<div class="t" style="left:574px;top:402.89px;font-size:13.6px;color:#000;font-weight:400;">&lt;Dim1&gt;</div>
<div class="a" style="left:631px;top:380px;width:17px;height:17px;background:#fdfdfd;border:1px solid #ababab"></div>
<svg style="left:636px;top:387px" width="8" height="5"><path d="M0 0H7.5L3.75 4Z" fill="#666"/></svg>
<div class="t" style="left:651.5px;top:383.20px;font-size:13px;color:#000;font-weight:700;">Dim2</div>
<div class="t" style="left:651px;top:402.89px;font-size:13.6px;color:#000;font-weight:400;">&lt;Dim2&gt;</div>
<div class="a" style="left:708px;top:380px;width:17px;height:17px;background:#fdfdfd;border:1px solid #ababab"></div>
<svg style="left:713px;top:387px" width="8" height="5"><path d="M0 0H7.5L3.75 4Z" fill="#666"/></svg>
<div class="t" style="left:728.5px;top:383.20px;font-size:13px;color:#000;font-weight:700;">Dim3</div>
<div class="t" style="left:728px;top:402.89px;font-size:13.6px;color:#000;font-weight:400;">&lt;Dim3&gt;</div>
<div class="a" style="left:785px;top:380px;width:17px;height:17px;background:#fdfdfd;border:1px solid #ababab"></div>
<svg style="left:790px;top:387px" width="8" height="5"><path d="M0 0H7.5L3.75 4Z" fill="#666"/></svg>
<div class="t" style="left:805.5px;top:383.20px;font-size:13px;color:#000;font-weight:700;">sum(Expression1)</div>
<div class="t" style="left:805px;top:402.89px;font-size:13.6px;color:#000;font-weight:400;">&lt;sum(Expression1)&gt;</div>
<div class="a" style="left:918px;top:380px;width:17px;height:17px;background:#fdfdfd;border:1px solid #ababab"></div>
<svg style="left:923px;top:387px" width="8" height="5"><path d="M0 0H7.5L3.75 4Z" fill="#666"/></svg>
<div class="t" style="left:938.5px;top:383.20px;font-size:13px;color:#000;font-weight:700;">sum(Expression2)</div>
<div class="t" style="left:938px;top:402.89px;font-size:13.6px;color:#000;font-weight:400;">&lt;sum(Expression2)&gt;</div>
<div class="a" style="left:1051px;top:380px;width:17px;height:17px;background:#fdfdfd;border:1px solid #ababab"></div>
<svg style="left:1056px;top:387px" width="8" height="5"><path d="M0 0H7.5L3.75 4Z" fill="#666"/></svg>
<div class="t" style="left:1071.5px;top:383.20px;font-size:13px;color:#000;font-weight:700;">sum(Expression3)</div>
<div class="t" style="left:1071px;top:402.89px;font-size:13.6px;color:#000;font-weight:400;">&lt;sum(Expression3)&gt;</div>
<div class="a" style="left:1184px;top:380px;width:17px;height:17px;background:#fdfdfd;border:1px solid #ababab"></div>
<svg style="left:1189px;top:387px" width="8" height="5"><path d="M0 0H7.5L3.75 4Z" fill="#666"/></svg>
<div class="a" style="left:1067px;top:557px;width:136px;height:23px;border:2px solid #217346"></div>
<div class="a" style="left:1198px;top:575px;width:7px;height:7px;background:#217346;border:1px solid #fff"></div>
<div class="a" style="left:556px;top:361px;width:666px;height:109px;border:3px solid #e8473f"></div>
<svg style="left:0;top:0" width="1249" height="659" viewBox="0 0 1249 659">
<defs><filter id="sh" x="-10%" y="-50%" width="120%" height="200%"><feGaussianBlur in="SourceAlpha" stdDeviation="2"/><feOffset dx="1.5" dy="3"/><feComponentTransfer><feFuncA type="linear" slope="0.5"/></feComponentTransfer><feMerge><feMergeNode/><feMergeNode in="SourceGraphic"/></feMerge></filter></defs>
<g filter="url(#sh)">
<line x1="239.5" y1="297.5" x2="514" y2="381" stroke="#e8473f" stroke-width="10" stroke-linecap="round"/>
<path d="M518.4 367.8 L542.4 390 L509.6 395.5 Z" fill="#e8473f"/>
</g>
</svg>
</body></html>
